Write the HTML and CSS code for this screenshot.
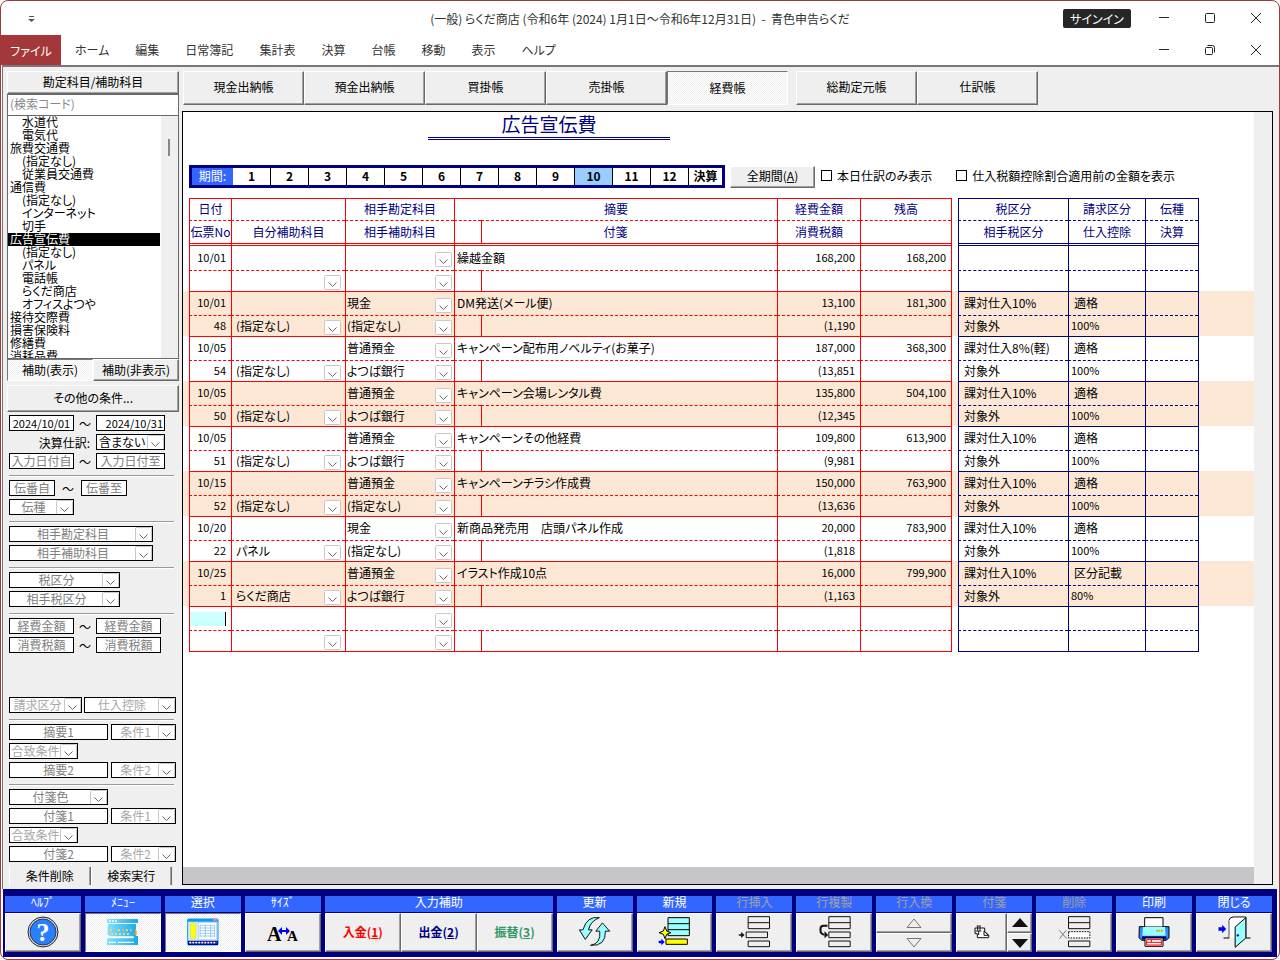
FILE: index.html
```
<!DOCTYPE html>
<html lang="ja">
<head>
    <meta charset="utf-8">
    <title>青色申告らくだ</title>
    <link rel="stylesheet" href="styles.css">
</head>
<body>
<div class="window">

    <!-- タイトルバー -->
    <header class="titlebar">
        <button class="quick" aria-label="クイックアクセス">
            <svg width="7" height="7" viewBox="0 0 7 7"><path d="M1 1.5h5" stroke="#555"/><path d="M0 4h7L3.500 7z" fill="#555"/></svg>
        </button>
        <h1>(一般) らくだ商店 (令和6年 (2024) 1月1日～令和6年12月31日)&nbsp; -&nbsp; 青色申告らくだ</h1>
        <div class="title-right">
            <button class="signin">サインイン</button>
            <div class="winctl">
                <button aria-label="最小化"><svg width="12" height="12"><path d="M1 5.500h10" stroke="#222"/></svg></button>
                <button aria-label="最大化"><svg width="12" height="12"><rect x="1.500" y="1.500" width="9" height="9" rx="1" fill="none" stroke="#222"/></svg></button>
                <button aria-label="閉じる"><svg width="12" height="12"><path d="M1 1l10 10M11 1L1 11" stroke="#222"/></svg></button>
            </div>
        </div>
    </header>

    <!-- メニュー -->
    <nav class="menubar">
        <button class="file">ファイル</button>
        <div class="menus">
            <a href="#">ホーム</a>
            <a href="#">編集</a>
            <a href="#">日常簿記</a>
            <a href="#">集計表</a>
            <a href="#">決算</a>
            <a href="#">台帳</a>
            <a href="#">移動</a>
            <a href="#">表示</a>
            <a href="#">ヘルプ</a>
        </div>
        <div class="winctl">
            <button aria-label="最小化"><svg width="12" height="12"><path d="M1 5.500h10" stroke="#222"/></svg></button>
            <button aria-label="元に戻す"><svg width="12" height="12"><rect x="1.500" y="3.500" width="7" height="7" rx="1" fill="none" stroke="#222"/><path d="M3.500 1.500h5q2 0 2 2v5" fill="none" stroke="#222"/></svg></button>
            <button aria-label="閉じる"><svg width="12" height="12"><path d="M1 1l10 10M11 1L1 11" stroke="#222"/></svg></button>
        </div>
    </nav>

    <div class="workspace">

        <!-- 左側: 科目一覧と検索条件 -->
        <aside class="sidebar">
            <button class="btn side-head">勘定科目/補助科目</button>
            <input class="search" type="text" placeholder="(検索コード)" aria-label="検索コード">
            <div class="accounts">
                <ul>
                    <li class="sub">水道代</li>
                    <li class="sub">電気代</li>
                    <li>旅費交通費</li>
                    <li class="sub">(指定なし)</li>
                    <li class="sub">従業員交通費</li>
                    <li>通信費</li>
                    <li class="sub">(指定なし)</li>
                    <li class="sub">インターネット</li>
                    <li class="sub">切手</li>
                    <li class="current">広告宣伝費</li>
                    <li class="sub">(指定なし)</li>
                    <li class="sub">パネル</li>
                    <li class="sub">電話帳</li>
                    <li class="sub">らくだ商店</li>
                    <li class="sub">オフィスよつや</li>
                    <li>接待交際費</li>
                    <li>損害保険料</li>
                    <li>修繕費</li>
                    <li>消耗品費</li>
                </ul>
                <div class="scroll"><div class="thumb"></div></div>
            </div>
            <div class="pair">
                <button class="btn pressed">補助(表示)</button>
                <button class="btn">補助(非表示)</button>
            </div>
            <button class="btn other">その他の条件...</button>

            <div class="conds">
                <div class="row">
                    <input class="f65 dark date" value="2024/10/01" aria-label="日付自"><span>～</span><input class="f69 dark date right" value="2024/10/31" aria-label="日付至">
                </div>
                <div class="row">
                    <label class="grow" for="kessan">決算仕訳:</label><select id="kessan" class="f69 dark left"><option>含まない</option></select>
                </div>
                <div class="row">
                    <input class="f65" value="入力日付自" aria-label="入力日付自"><span>～</span><input class="f69" value="入力日付至" aria-label="入力日付至">
                </div>
                <hr>
                <div class="row">
                    <input class="f46" value="伝番自" aria-label="伝番自"><span class="wide">～</span><input class="f46" value="伝番至" aria-label="伝番至">
                </div>
                <div class="row"><select class="f65" aria-label="伝種"><option>伝種</option></select></div>
                <hr>
                <div class="row"><select class="f144" aria-label="相手勘定科目"><option>相手勘定科目</option></select></div>
                <div class="row"><select class="f144" aria-label="相手補助科目"><option>相手補助科目</option></select></div>
                <hr>
                <div class="row"><select class="f111" aria-label="税区分"><option>税区分</option></select></div>
                <div class="row"><select class="f111" aria-label="相手税区分"><option>相手税区分</option></select></div>
                <hr>
                <div class="row">
                    <input class="f65" value="経費金額" aria-label="経費金額自"><span>～</span><input class="f65" value="経費金額" aria-label="経費金額至">
                </div>
                <div class="row">
                    <input class="f65" value="消費税額" aria-label="消費税額自"><span>～</span><input class="f65" value="消費税額" aria-label="消費税額至">
                </div>
            </div>

            <div class="conds bottom">
                <div class="row">
                    <select class="f73 pale" aria-label="請求区分"><option>請求区分</option></select>
                    <select class="f92 pale push" aria-label="仕入控除"><option>仕入控除</option></select>
                </div>
                <hr>
                <div class="row">
                    <input class="f99" value="摘要1" aria-label="摘要1">
                    <select class="f65 pale push" aria-label="摘要1の条件"><option>条件1</option></select>
                </div>
                <div class="row"><select class="f69 pale" aria-label="摘要の合致条件"><option>合致条件</option></select></div>
                <div class="row">
                    <input class="f99" value="摘要2" aria-label="摘要2">
                    <select class="f65 pale push" aria-label="摘要2の条件"><option>条件2</option></select>
                </div>
                <hr>
                <div class="row"><select class="f99" aria-label="付箋色"><option>付箋色</option></select></div>
                <div class="row">
                    <input class="f99" value="付箋1" aria-label="付箋1">
                    <select class="f65 pale push" aria-label="付箋1の条件"><option>条件1</option></select>
                </div>
                <div class="row"><select class="f69 pale" aria-label="付箋の合致条件"><option>合致条件</option></select></div>
                <div class="row">
                    <input class="f99" value="付箋2" aria-label="付箋2">
                    <select class="f65 pale push" aria-label="付箋2の条件"><option>条件2</option></select>
                </div>
            </div>
            <div class="run">
                <button>条件削除</button>
                <button>検索実行</button>
            </div>
        </aside>

        <!-- 右側: 帳簿 -->
        <main class="main">
            <div class="tabs">
                <button class="btn">現金出納帳</button>
                <button class="btn">預金出納帳</button>
                <button class="btn">買掛帳</button>
                <button class="btn">売掛帳</button>
                <button class="btn pressed">経費帳</button>
                <button class="btn second">総勘定元帳</button>
                <button class="btn">仕訳帳</button>
            </div>

            <div class="sheet">
                <div class="paper">
                    <h2>広告宣伝費</h2>

                    <div class="filters">
                        <div class="period">
                            <span>期間:</span>
                            <button>1</button>
                            <button>2</button>
                            <button>3</button>
                            <button>4</button>
                            <button>5</button>
                            <button>6</button>
                            <button>7</button>
                            <button>8</button>
                            <button>9</button>
                            <button class="on">10</button>
                            <button>11</button>
                            <button>12</button>
                            <button>決算</button>
                        </div>
                        <button class="btn all">全期間(<u>A</u>)</button>
                        <label class="check today"><input type="checkbox">本日仕訳のみ表示</label>
                        <label class="check"><input type="checkbox">仕入税額控除割合適用前の金額を表示</label>
                    </div>

                    <table class="ledger">
                        <colgroup>
                            <col class="c-edge"><col class="c-date"><col class="c-self"><col class="c-partner"><col class="c-tag"><col class="c-memo">
                            <col class="c-amount"><col class="c-balance"><col class="c-gap"><col class="c-tax"><col class="c-invoice"><col class="c-type"><col>
                        </colgroup>
                        <thead>
                            <tr class="first">
                                <td class="edge"></td><th>日付</th><th></th><th>相手勘定科目</th><th colspan="2">摘要</th><th>経費金額</th><th>残高</th>
                                <td class="gap"></td><th class="navy">税区分</th><th class="navy">請求区分</th><th class="navy">伝種</th><td class="edge last"></td>
                            </tr>
                            <tr class="second">
                                <td class="edge"></td><th>伝票No</th><th>自分補助科目</th><th>相手補助科目</th><th></th><th class="tag-head">付箋</th><th>消費税額</th><th></th>
                                <td class="gap"></td><th class="navy">相手税区分</th><th class="navy">仕入控除</th><th class="navy">決算</th><td class="edge last"></td>
                            </tr>
                        </thead>
                    </table>
                </div>
                <div class="vscroll"></div>
                <div class="hscroll"></div>
            </div>
        </main>
    </div>

    <!-- 下のツールバー -->
    <footer class="toolbar">
        <div class="tool">
            <h3>ﾍﾙﾌﾟ</h3>
            <button class="btn" aria-label="ヘルプ">
                <svg width="32" height="32" viewBox="0 0 32 32"><circle cx="16" cy="16" r="15" fill="#ddd" stroke="#222"/><circle cx="16" cy="16" r="13" fill="#2a7fff" stroke="#223a66"/><text class="q" x="16" y="25" text-anchor="middle">?</text></svg>
            </button>
        </div>
        <div class="tool">
            <h3>ﾒﾆｭｰ</h3>
            <button class="btn pressed" aria-label="メニュー">
                <svg width="31" height="26" viewBox="324 105 93 78">
                    <defs><linearGradient id="sky"><stop offset="0" stop-color="#7fe4ff"/><stop offset="1" stop-color="#18a8e8"/></linearGradient></defs>
                    <path d="M324 105h93v12h-93zM327 120h84v36h6v27h-93v-16z" fill="url(#sky)"/>
                    <path d="M330 111h24" stroke="#fff" stroke-width="4" stroke-dasharray="6 3"/>
                    <path d="M324 152l14 5h66v6h-80z" fill="#fff"/>
                    <path d="M333 139h64M336 150h56" stroke="#f5d76e" stroke-width="6" stroke-dasharray="6 6"/>
                    <path d="M345 139h50" stroke="#e08c8c" stroke-width="4" stroke-dasharray="5 19"/>
                    <path d="M408 134l5 6v14h-5z" fill="#f7a600"/>
                    <path d="M329 175h22M357 175h48" stroke="#fff" stroke-width="4"/>
                </svg>
            </button>
        </div>
        <div class="tool">
            <h3>選択</h3>
            <button class="btn pressed" aria-label="選択">
                <svg width="32" height="28" viewBox="563 100 96 84">
                    <rect x="565" y="103" width="91" height="78" rx="3" fill="#cfeaff" stroke="#0a9cec" stroke-width="3"/>
                    <path d="M565 103h91v8h-91z" fill="#0a9cec"/><path d="M642 101h11v7h-11z" fill="#ff7fa8"/>
                    <rect x="574" y="115" width="15" height="46" fill="#ff0" stroke="#d8cf3c"/>
                    <rect x="597" y="114" width="54" height="50" fill="#fff" stroke="#8ac"/>
                    <path d="M602 122h44M602 130h44M602 138h44M602 146h44M602 154h44M602 122v36M618 122v36M634 122v36M646 122v36" stroke="#6ab4ee" stroke-width="2"/>
                    <path d="M566 168h90v13h-90z" fill="#000080"/><path d="M570 174h82" stroke="#fff" stroke-width="5" stroke-dasharray="6 3"/>
                </svg>
            </button>
        </div>
        <div class="tool">
            <h3>ｻｲｽﾞ</h3>
            <button class="btn" aria-label="サイズ">
                <svg width="32" height="28" viewBox="0 0 32 28"><text class="big-a" x="0" y="23">A</text><text class="small-a" x="20" y="23">A</text><path d="M11 13l4-4v3h4V9l4 4-4 4v-3h-4v3z" fill="#00f"/></svg>
            </button>
        </div>
        <div class="tool">
            <h3>入力補助</h3>
            <div class="three">
                <button class="btn in">入金(<u>1</u>)</button>
                <button class="btn out">出金(<u>2</u>)</button>
                <button class="btn move">振替(<u>3</u>)</button>
            </div>
        </div>
        <div class="tool">
            <h3>更新</h3>
            <button class="btn" aria-label="更新">
                <svg width="33" height="31" viewBox="472 92 98 94"><g fill="#9ff" stroke="#111" stroke-width="3"><path d="M536 97Q498 91 486 134H475L493 163L514 134H503Q507 109 536 97Z"/><path d="M509 181Q541 176 537 138H525L545 113L567 138H554Q556 184 509 181Z"/></g></svg>
            </button>
        </div>
        <div class="tool">
            <h3>新規</h3>
            <button class="btn" aria-label="新規">
                <svg width="32" height="29" viewBox="712 92 96 87"><g stroke="#000" stroke-width="3"><path d="M742 94h64v54h-64zM742 112h64M742 130h64" fill="#9ff"/><path d="M736 158h64v16h-64zM733 121l5 13 13 5-13 5-5 13-5-13-13-5 13-5z" fill="#ff0"/></g><path d="M714 163h8v-6l10 10-10 10v-6h-8z" fill="#00f"/></svg>
            </button>
        </div>
        <div class="tool off">
            <h3>行挿入</h3>
            <button class="btn" aria-label="行挿入">
                <svg width="33" height="32" viewBox="952 92 98 96"><path d="M982 94h64v36h-64zM982 112h64M976 140h64v17h-64zM982 167h64v17h-64z" fill="none" stroke="#111" stroke-width="3"/><path d="M954 147h7v-7l10 9-10 9v-7h-7z" fill="#111"/></svg>
            </button>
        </div>
        <div class="tool off">
            <h3>行複製</h3>
            <button class="btn" aria-label="行複製">
                <svg width="33" height="32" viewBox="1190 92 98 96"><path d="M1222 94h64v36h-64zM1222 112h64M1222 140h64v17h-64zM1222 167h64v17h-64z" fill="none" stroke="#111" stroke-width="3"/><path d="M1218 121h-12q-9 0-9 9v6q0 10 12 12" fill="none" stroke="#111" stroke-width="6"/><path d="M1209 138l11 11-11 10z" fill="#111"/></svg>
            </button>
        </div>
        <div class="tool off">
            <h3>行入換</h3>
            <div class="updown">
                <button class="btn" aria-label="上と入換"><svg width="16" height="10"><path d="M1 9.500L8 1l7 8.500z" fill="#eee" stroke="#777"/></svg></button>
                <button class="btn" aria-label="下と入換"><svg width="16" height="10"><path d="M1 .500L8 9l7-8.500z" fill="#eee" stroke="#777"/></svg></button>
            </div>
        </div>
        <div class="tool off">
            <h3>付箋</h3>
            <div class="tag-tool">
                <button class="btn" aria-label="付箋"><svg width="16" height="14" viewBox="368 117 48 42"><path d="M371 126h29v10l12 12v7h-34v-12h-7z" fill="#fff" stroke="#111" stroke-width="3"/><path d="M376 120h12M379 121v13M386 121v13M372 135h18M382 135v12M398 135l14 13h-14z" fill="none" stroke="#111" stroke-width="3"/></svg></button>
                <div class="updown">
                    <button class="btn" aria-label="前の付箋"><svg width="16" height="10"><path d="M0 9L8 0l8 9z" fill="#111"/></svg></button>
                    <button class="btn" aria-label="次の付箋"><svg width="16" height="10"><path d="M0 1l8 9 8-9z" fill="#111"/></svg></button>
                </div>
            </div>
        </div>
        <div class="tool off">
            <h3>削除</h3>
            <button class="btn" aria-label="削除">
                <svg width="33" height="32" viewBox="618 92 98 96"><path d="M649 94h64v36h-64zM649 112h64M649 167h64v17h-64z" fill="none" stroke="#111" stroke-width="3"/><path d="M649 139h64v19h-64z" fill="#fff" stroke="#111" stroke-width="3" stroke-dasharray="5 3"/><path d="M621 135l23 25M642 135l-20 25" stroke="#777" stroke-width="3"/></svg>
            </button>
        </div>
        <div class="tool">
            <h3>印刷</h3>
            <button class="btn" aria-label="印刷">
                <svg width="32" height="30" viewBox="860 95 96 90"><path d="M864 124h89v33l-8 8h-74l-8-8z" fill="#2a8cff" stroke="#000" stroke-width="3"/><path d="M880 97h55v28h-55z" fill="#fff" stroke="#000" stroke-width="3"/><path d="M875 125h66l2 26h-70z" fill="#9ff"/><path d="M915 136h21" stroke="#d8a800" stroke-width="6" stroke-dasharray="5 2"/><path d="M872 153h73v9h-73z" fill="#000080"/><path d="M881 158h54v25h-54z" fill="#fff" stroke="#000" stroke-width="3"/><path d="M886 163h44v16h-44zM886 171h44M900 163v8" fill="none" stroke="#f00" stroke-width="3"/></svg>
            </button>
        </div>
        <div class="tool">
            <h3>閉じる</h3>
            <button class="btn" aria-label="閉じる">
                <svg width="33" height="32" viewBox="1100 91 98 96"><path d="M1116 157h17v-54q3-9 12-9h38v63h14" fill="none" stroke="#000" stroke-width="3"/><path d="M1134 157v-53q3-8 12-8h35v61z" fill="#fff"/><path d="M1151 124l32-28v61l-32 28z" fill="#9ff" stroke="#000" stroke-width="3"/><path d="M1155 149h8M1159 145v8" stroke="#00c" stroke-width="3"/><path d="M1101 125h11v-8l12 13-12 13v-8h-11z" fill="#00f"/></svg>
            </button>
        </div>
    </footer>
</div>
<script src="ledger.js"></script>
</body>
</html>
```
FILE: styles.css
```
* {
    box-sizing: border-box;
}
body {
    margin: 0;
    background: #fff;
    font-family: "Noto Sans CJK JP", sans-serif;
    font-feature-settings: "palt";
    font-size: 12px;
    line-height: 13px;
    color: #000;
}
button, input, select {
    font: inherit;
    font-feature-settings: inherit;
    color: inherit;
    margin: 0;
    padding: 0;
}
button {
    border: none;
    background: none;
    white-space: nowrap;
}
h1, h2, h3, ul {
    margin: 0;
    padding: 0;
    font-weight: normal;
}
svg {
    display: block;
}

.window {
    display: flex;
    flex-direction: column;
    min-height: 100vh;
    border: 1px solid #a4373a;
    border-radius: 8px;
    padding-bottom: 2px;
    overflow: hidden;
}

/* タイトルバー */
.titlebar {
    display: grid;
    grid-template-columns: 1fr auto 1fr;
    align-items: center;
    height: 34px;
}
.titlebar h1 {
    font-size: 12px;
    color: #333;
    padding-top: 1px;
}
.quick {
    justify-self: start;
    margin-left: 27px;
}
.title-right {
    display: flex;
    justify-content: flex-end;
    align-items: center;
}
.signin {
    width: 68px;
    height: 19px;
    margin-right: 10px;
    background: #262626;
    color: #fff;
    border-radius: 2px;
}
.winctl {
    display: flex;
}
.winctl button {
    display: flex;
    justify-content: center;
    align-items: center;
    width: 46px;
    height: 28px;
}
.menubar {
    display: flex;
    align-items: center;
    height: 30px;
}
.file {
    width: 60px;
    height: 30px;
    background: #a4373a;
    color: #fff;
}
.menus {
    flex: 1;
    display: flex;
    gap: 26px;
    padding: 0 0 2px 14px;
}
.menus a {
    color: #333;
    text-decoration: none;
}

/* ボタン */
.btn {
    display: flex;
    justify-content: center;
    align-items: center;
    padding-bottom: 2px;
    background: #efefef;
    border: 1px solid;
    border-color: #fff #696969 #696969 #fff;
    box-shadow: inset -1px -1px #a0a0a0;
}
.btn.pressed {
    background: repeating-conic-gradient(#fff 0 25%, #efefef 0 50%) 0 0 / 2px 2px;
    border-color: #777 #fff #fff #777;
    box-shadow: none;
}

.workspace {
    flex: 1;
    display: grid;
    grid-template-columns: 172px 1fr;
    gap: 3px;
    padding: 4px 6px 4px 4px;
    margin-left: 1px;
    background: #efefef;
    border-top: 2px solid #777;
    border-left: 1px solid #777;
}

/* 科目一覧 */
.sidebar {
    display: flex;
    flex-direction: column;
}
.side-head {
    height: 23px;
}
.search {
    height: 22px;
    border: 1px solid #696969;
    padding: 0 2px 4px;
    background: #fff;
}
.search::placeholder {
    color: #888;
}
.accounts {
    display: flex;
    height: 243px;
    background: #fff;
    border: 1px solid #696969;
    border-top: none;
    overflow: hidden;
}
.accounts ul {
    flex: 1;
    list-style: none;
}
.accounts li {
    height: 13px;
    padding-left: 2px;
    margin-right: 1px;
    line-height: 12px;
}
.accounts .sub {
    padding-left: 14px;
}
.accounts .current {
    background: #000;
    color: #fff;
}
.scroll {
    width: 17px;
    padding: 23px 0 0 7px;
    background: #efefef;
}
.thumb {
    width: 2px;
    height: 17px;
    background: #888;
}
.pair {
    display: grid;
    grid-template-columns: 1fr 1fr;
    height: 22px;
}
.other {
    height: 27px;
    margin: 4px 0 3px;
}

/* 検索条件 */
.conds {
    display: flex;
    flex-direction: column;
    padding-left: 2px;
}
.conds.bottom {
    margin-top: auto;
}
.conds .row {
    display: flex;
    align-items: center;
    height: 16px;
    margin-bottom: 3px;
    padding-right: 3px;
}
.conds .row span {
    width: 22px;
    text-align: center;
    font-size: 12px;
}
.conds .row .wide {
    width: 26px;
}
.conds .grow {
    width: 87px;
    padding-right: 6px;
    text-align: right;
}
.conds hr {
    width: 165px;
    height: 2px;
    margin: 3px 0;
    border: none;
    border-top: 1px solid #999;
    background: #fff;
}
.conds input, .conds select {
    height: 16px;
    padding-bottom: 1px;
    border: 1px solid #000;
    border-radius: 0;
    background-color: #fff;
    color: #808080;
    text-align: center;
    text-align-last: center;
    line-height: 12px;
}
.conds .pale {
    color: #a8a8a8;
}
.conds .dark {
    color: #000;
}
.conds .date {
    font-size: 11px;
}
.conds .left {
    text-align-last: left;
    padding-left: 2px;
}
.conds .right {
    text-align-last: right;
    padding-right: 1px;
}
.conds .push {
    margin-left: auto;
}
.f46 { width: 46px; }
.f65 { width: 65px; }
.f69 { width: 69px; }
.f73 { width: 73px; }
.f92 { width: 92px; }
.f99 { width: 99px; }
.f111 { width: 111px; }
.f144 { width: 144px; }

select {
    appearance: none;
    background-repeat: no-repeat;
    background-image: url("data:image/svg+xml,%3Csvg xmlns='http://www.w3.org/2000/svg' width='17' height='15'%3E%3Crect x='.5' y='.5' width='16' height='14' rx='1' fill='white' stroke='%23c8c8c8'/%3E%3Cpath d='M4.500 7.500l4 4 4-4' fill='none' stroke='%23666'/%3E%3C/svg%3E");
}
.conds select {
    padding-right: 16px;
    background-position: right 0 top 0;
}
.run {
    display: grid;
    grid-template-columns: 1fr 1fr;
    margin: 2px 7px 0 2px;
}
.run button {
    height: 18px;
    padding-bottom: 2px;
    border-left: 1px solid #fff;
    border-right: 1px solid #696969;
    box-shadow: inset -1px 0 #a0a0a0;
}

/* 帳簿 */
.main {
    display: flex;
    flex-direction: column;
    min-width: 0;
}
.tabs {
    display: flex;
    padding-left: 1px;
    margin-bottom: 6px;
}
.tabs .btn {
    width: 121px;
    height: 34px;
    padding-bottom: 3px;
}
.tabs .pressed {
    padding-bottom: 1px;
}
.tabs .second {
    margin-left: 8px;
}
.sheet {
    flex: 1;
    display: grid;
    grid-template-columns: 1fr 18px;
    grid-template-rows: 1fr 17px;
    border: 1px solid #000;
}
.paper {
    background: #fff;
    min-width: 0;
}
.hscroll {
    background: #c6c6ca;
}
.paper h2 {
    width: 242px;
    margin: 2px 0 0 245px;
    padding-bottom: 3px;
    border-bottom: 3px double #000080;
    font-size: 19px;
    line-height: 20px;
    text-align: center;
    color: #000080;
}
.filters {
    display: flex;
    align-items: center;
    margin: 25px 0 10px 6px;
}
.period {
    display: flex;
    height: 23px;
    border: 3px solid #000080;
}
.period span {
    width: 41px;
    background: #3366ff;
    color: #fff;
    text-align: center;
    line-height: 15px;
}
.period button {
    width: 38px;
    padding-bottom: 2px;
    border-right: 1px solid #000;
    font-weight: bold;
}
.period button:last-child {
    width: 33px;
    border-right: none;
}
.period .on {
    background: #99ccff;
}
.all {
    width: 85px;
    height: 22px;
    margin: 0 6px 0 5px;
    padding-bottom: 3px;
}
.check {
    display: flex;
    align-items: center;
    gap: 5px;
    padding-bottom: 2px;
}
.check input {
    appearance: none;
    width: 11px;
    height: 11px;
    border: 1px solid #000;
    background: #fff;
}
.check input:checked {
    background: #000;
}
.today {
    margin-right: 24px;
}

.ledger {
    width: 100%;
    table-layout: fixed;
    border-collapse: separate;
    border-spacing: 0;
}
.c-edge { width: 6px; }
.c-date { width: 42px; }
.c-self { width: 114px; }
.c-partner { width: 109px; }
.c-tag { width: 27px; }
.c-memo { width: 296px; }
.c-amount { width: 83px; }
.c-balance { width: 91px; }
.c-gap { width: 7px; }
.c-tax { width: 110px; }
.c-invoice { width: 77px; }
.c-type { width: 53px; }

.ledger td, .ledger th {
    height: 24px;
    padding: 0 0 2px;
    border: 0 solid #f00;
    border-left-width: 1px;
    border-top-width: 1px;
    font-weight: normal;
    white-space: nowrap;
}
.ledger .second td, .ledger .second th {
    height: 21px;
    border-top-style: dashed;
}
.ledger th {
    color: #000080;
}
.ledger thead .first > * {
    height: 22px;
}
.ledger thead .second > * {
    height: 23px;
}
.ledger .tag-head {
    padding-right: 28px;
}
.ledger .navy {
    border-color: #000080;
}
.ledger tr .edge, .ledger tr .gap {
    border-top-width: 0;
    border-left-width: 0;
}
.ledger tr .gap {
    border-left-width: 1px;
}
.ledger tr .last {
    border-left: 1px solid #000080;
}
.ledger tbody:nth-of-type(1) .first > :not(.edge):not(.gap) {
    height: 27px;
    border-top: 3px double #f00;
}
.ledger tbody:nth-of-type(1) .first > .navy:not(.edge):not(.gap) {
    border-top-color: #000080;
}
.ledger tbody:last-child .second > * {
    height: 22px;
}
.ledger tbody:last-child .second > :not(.edge):not(.gap) {
    border-bottom: 1px solid #f00;
}
.ledger tbody:last-child .second > .navy:not(.edge):not(.gap) {
    border-bottom-color: #000080;
}
.ledger tbody:nth-of-type(even) {
    background: #fce6d4;
}
.ledger .num {
    padding-right: 5px;
    text-align: right;
    font-size: 11px;
}
.ledger .text {
    padding-left: 2px;
}
.ledger .text.navy {
    padding-left: 5px;
}
.ledger .text.rate {
    padding-left: 2px;
    font-size: 11px;
}
.ledger .box {
    padding-bottom: 0;
}
.ledger select {
    display: block;
    width: 100%;
    height: 20px;
    padding: 0 0 2px 1px;
    border: none;
    background-color: transparent;
    background-position: right 2px top 4px;
}
.ledger .self select {
    padding-left: 4px;
    background-position: right 4px top 4px;
}
.entry {
    display: block;
    width: 36px;
    height: 14px;
    border: none;
    border-right: 1px solid #000;
    background: #ccffff;
}

/* ツールバー */
.toolbar {
    display: grid;
    grid-template-columns: repeat(4, 1fr) 3fr repeat(9, 1fr);
    gap: 4px;
    margin: 0 2px 0 2px;
    padding: 7px 5px 5px 2px;
    background: #000080;
}
.tool {
    min-width: 0;
}
.tool h3 {
    height: 16px;
    margin-bottom: 1px;
    background: #3366ff;
    color: #fff;
    font-size: 12px;
    line-height: 12px;
    text-align: center;
}
.tool.off h3 {
    color: #a0a0a0;
}
.tool .btn {
    width: 100%;
    height: 39px;
}
.three {
    display: grid;
    grid-template-columns: repeat(3, 1fr);
    font-weight: bold;
}
.in {
    color: #f00;
}
.out {
    color: #000080;
}
.move {
    color: #339966;
}
.tool .updown .btn {
    height: 20px;
    padding-bottom: 0;
}
.tool .updown .btn + .btn {
    height: 19px;
}
.tag-tool {
    display: grid;
    grid-template-columns: 2fr 1fr;
}
.q {
    font: bold 26px "Liberation Serif", serif;
    fill: #fff;
}
.big-a {
    font: bold 20px "Liberation Serif", serif;
}
.small-a {
    font: bold 15px "Liberation Serif", serif;
}
```
FILE: ledger.js
```
// 日付, 相手科目, 摘要, 金額, 残高, 税区分, 請求区分 / 伝票No, 自分補助, 相手補助, 消費税, 相手税区分, 仕入控除
var rows = [
    ["10/01", "", "繰越金額", "168,200", "168,200", "", "", "", "", "", "", "", ""],
    ["10/01", "現金", "DM発送(メール便)", "13,100", "181,300", "課対仕入10%", "適格", "48", "(指定なし)", "(指定なし)", "(1,190", "対象外", "100%"],
    ["10/05", "普通預金", "キャンペーン配布用ノベルティ(お菓子)", "187,000", "368,300", "課対仕入8%(軽)", "適格", "54", "(指定なし)", "よつば銀行", "(13,851", "対象外", "100%"],
    ["10/05", "普通預金", "キャンペーン会場レンタル費", "135,800", "504,100", "課対仕入10%", "適格", "50", "(指定なし)", "よつば銀行", "(12,345", "対象外", "100%"],
    ["10/05", "普通預金", "キャンペーンその他経費", "109,800", "613,900", "課対仕入10%", "適格", "51", "(指定なし)", "よつば銀行", "(9,981", "対象外", "100%"],
    ["10/15", "普通預金", "キャンペーンチラシ作成費", "150,000", "763,900", "課対仕入10%", "適格", "52", "(指定なし)", "(指定なし)", "(13,636", "対象外", "100%"],
    ["10/20", "現金", "新商品発売用　店頭パネル作成", "20,000", "783,900", "課対仕入10%", "適格", "22", "パネル", "(指定なし)", "(1,818", "対象外", "100%"],
    ["10/25", "普通預金", "イラスト作成10点", "16,000", "799,900", "課対仕入10%", "区分記載", "1", "らくだ商店", "よつば銀行", "(1,163", "対象外", "80%"],
    ["", "", "", "", "", "", "", "", "", "", "", "", ""]
];

function td(cls, text) {
    return '<td class="' + cls + '">' + text + '</td>';
}
function combo(name, text) {
    return '<select aria-label="' + name + '"><option>' + text + '</option></select>';
}

var table = document.querySelector(".ledger");
rows.forEach(function(r, i) {
    var body = document.createElement("tbody");
    // 最後の行は新規入力用
    var isNew = i == rows.length - 1;
    var date = isNew ? td("box", '<input class="entry" aria-label="日付">') : td("num", r[0]);
    body.innerHTML =
        '<tr class="first">' + td("edge", "") + date + td("", "") + td("box", combo("相手勘定科目", r[1])) +
        '<td class="text" colspan="2">' + r[2] + '</td>' + td("num", r[3]) + td("num", r[4]) + td("gap", "") +
        td("text navy", r[5]) + td("text navy", r[6]) + td("navy", "") + td("edge last", "") + '</tr>' +
        '<tr class="second">' + td("edge", "") + td("num", r[7]) + td("box self", combo("自分補助科目", r[8])) + td("box", combo("相手補助科目", r[9])) +
        td("", "") + td("", "") + td("num", r[10]) + td("", "") + td("gap", "") +
        td("text navy", r[11]) + td("text navy rate", r[12]) + td("navy", "") + td("edge last", "") + '</tr>';
    table.appendChild(body);
});
```
